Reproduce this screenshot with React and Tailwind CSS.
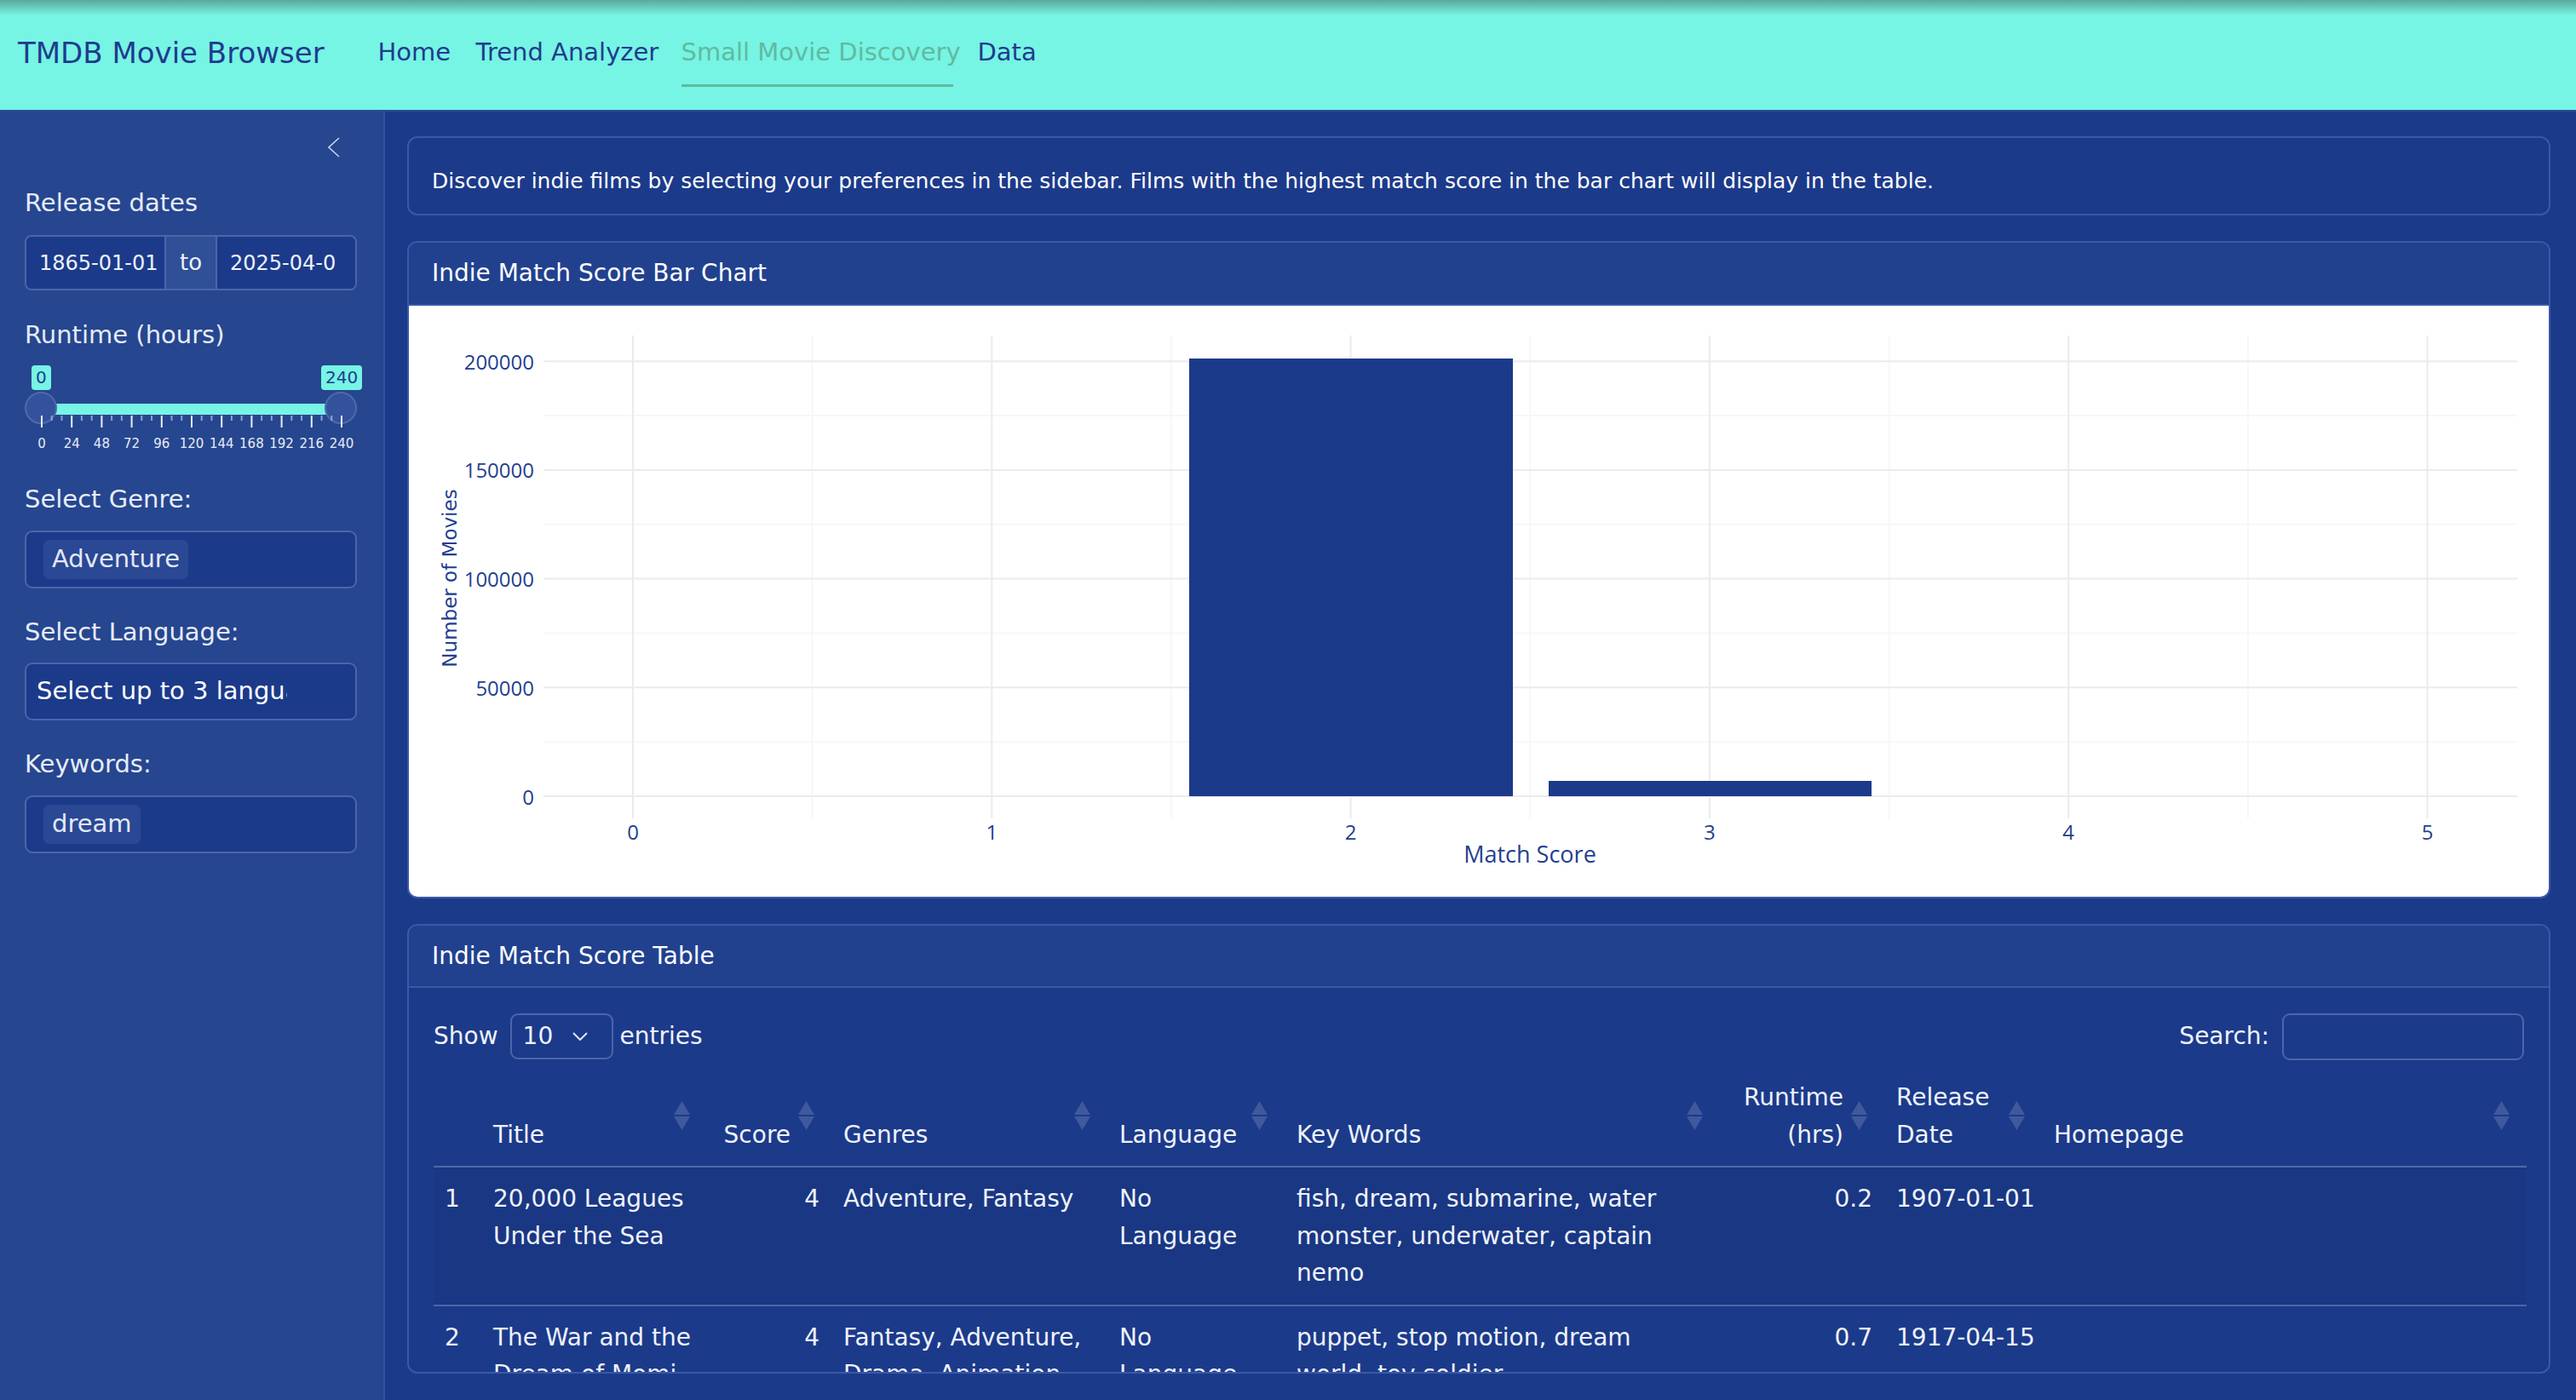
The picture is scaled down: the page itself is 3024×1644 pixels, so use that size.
import React from 'react';

const navLinks = [
    { label: 'Home', w: 'w-[115px]' },
    { label: 'Trend Analyzer', w: 'w-[241px]' },
    { label: 'Small Movie Discovery', w: 'w-[348px]', active: true },
    { label: 'Data', w: 'w-[100px]' },
];

const rows = [
    {
        n: 1,
        title: '20,000 Leagues Under the Sea',
        score: 4,
        genres: 'Adventure, Fantasy',
        lang: 'No Language',
        words: 'fish, dream, submarine, water monster, underwater, captain nemo',
        runtime: '0.2',
        date: '1907-01-01',
    },
    {
        n: 2,
        title: 'The War and the Dream of Momi',
        score: 4,
        genres: 'Fantasy, Adventure, Drama, Animation',
        lang: 'No Language',
        words: 'puppet, stop motion, dream world, toy soldier',
        runtime: '0.7',
        date: '1917-04-15',
    },
];

const columns = [
    { label: '', w: 'w-[56px]' },
    { label: 'Title', w: 'w-[265px]', sort: true },
    { label: 'Score', w: 'w-[146px]', sort: true, right: true },
    { label: 'Genres', w: 'w-[324px]', sort: true },
    { label: 'Language', w: 'w-[208px]', sort: true },
    { label: 'Key Words', w: 'w-[511px]', sort: true },
    { label: 'Runtime (hrs)', w: 'w-[193px]', sort: true, right: true },
    { label: 'Release Date', w: 'w-[185px]', sort: true },
    { label: 'Homepage', w: 'w-[569px]', sort: true },
];

function SortIcon() {
    return (
        <svg width="19" height="34" viewBox="0 0 19 34" className="absolute right-[20px] top-1/2 -translate-y-1/2">
            <polygon points="9.5,0 19,16 0,16" fill="#ffffff" fillOpacity="0.16" />
            <polygon points="0,18 19,18 9.5,34" fill="#ffffff" fillOpacity="0.16" />
        </svg>
    );
}

function Chip({ children }) {
    return (
        <span className="h-[46px] px-[10px] flex items-center rounded-[7px] bg-[#2a4894] text-[29px] text-[#e3e9f5]">
            {children}
        </span>
    );
}

function RangeSlider() {
    const majors = [0, 24, 48, 72, 96, 120, 144, 168, 192, 216, 240];
    const step = 35.2;
    const minors = [];
    for (let i = 0; i < 30; i++) {
        if (i % 3 !== 0) minors.push(20 + (i * step) / 3);
    }
    return (
        <div className="relative h-[119px]">
            {/* value bubbles */}
            <span className="absolute left-[8px] top-[14px] h-[29px] px-[5px] rounded-[4px] bg-[#76f4e4] text-[20px] leading-[29px] text-[#1f3b8d]">0</span>
            <span className="absolute left-[348px] top-[14px] h-[29px] px-[5px] rounded-[4px] bg-[#76f4e4] text-[20px] leading-[29px] text-[#1f3b8d]">240</span>
            {/* track */}
            <div className="absolute left-[19px] right-[19px] top-[59px] h-[13px] bg-[#76f4e4]" />
            {/* handles */}
            <div className="absolute left-0 top-[45px] w-[38px] h-[38px] rounded-full bg-[#34529b] border-2 border-[#4f6aab]" />
            <div className="absolute right-0 top-[45px] w-[38px] h-[38px] rounded-full bg-[#34529b] border-2 border-[#4f6aab]" />
            {/* ticks + labels */}
            <svg width="392" height="44" viewBox="0 0 392 44" className="absolute left-0 top-[73px]">
                {minors.map((x) => (
                    <rect key={x} x={x - 1} y="0" width="2" height="6" fill="#8fa2cf" />
                ))}
                {majors.map((m, i) => (
                    <g key={m}>
                        <rect x={20 + i * step - 1} y="0" width="2" height="14" fill="#e6ecf7" />
                        <text x={20 + i * step} y="38" textAnchor="middle" fontSize="15" fontFamily="DejaVu Sans, sans-serif" fill="#e6ecf7">
                            {m}
                        </text>
                    </g>
                ))}
            </svg>
        </div>
    );
}

function BarChart() {
    const X0 = 263;
    const DX = 421.3;
    const Y0 = 576;
    const PER = 127.7 / 50000;
    const left = 158;
    const right = 2475;
    const top = 35;
    const bottom = 602;
    const yTicks = [0, 50000, 100000, 150000, 200000];
    const yMinor = [25000, 75000, 125000, 175000];
    const xTicks = [0, 1, 2, 3, 4, 5];
    const xMinor = [0.5, 1.5, 2.5, 3.5, 4.5];
    const yPos = (v) => Y0 - v * PER;
    const xPos = (u) => X0 + u * DX;
    return (
        <svg width="2512" height="696" viewBox="0 0 2512 696" className="block">
            {/* minor grid */}
            {yMinor.map((v) => (
                <line key={v} x1={left} x2={right} y1={yPos(v)} y2={yPos(v)} stroke="#f7f7f7" strokeWidth="2" />
            ))}
            {xMinor.map((u) => (
                <line key={u} x1={xPos(u)} x2={xPos(u)} y1={top} y2={bottom} stroke="#f7f7f7" strokeWidth="2" />
            ))}
            {/* major grid */}
            {yTicks.map((v) => (
                <line key={v} x1={left} x2={right} y1={yPos(v)} y2={yPos(v)} stroke="#ebebeb" strokeWidth="2" />
            ))}
            {xTicks.map((u) => (
                <line key={u} x1={xPos(u)} x2={xPos(u)} y1={top} y2={bottom} stroke="#ebebeb" strokeWidth="2" />
            ))}
            {/* bars */}
            <rect x="916" y="62" width="380" height={Y0 - 62} fill="#1c3a8a" />
            <rect x="1338" y="558" width="379" height={Y0 - 558} fill="#1c3a8a" />
            {/* tick labels */}
            {yTicks.map((v) => (
                <text key={v} x="147" y={yPos(v)} textAnchor="end" dominantBaseline="central" fontSize="24" fontFamily="Open Sans, sans-serif" fill="#243f8f">
                    {v}
                </text>
            ))}
            {xTicks.map((u) => (
                <text key={u} x={xPos(u)} y="617" textAnchor="middle" dominantBaseline="central" fontSize="24" fontFamily="Open Sans, sans-serif" fill="#243f8f">
                    {u}
                </text>
            ))}
            <text x="1316" y="643" textAnchor="middle" dominantBaseline="central" fontSize="27" fontFamily="Open Sans, sans-serif" fill="#243f8f">
                Match Score
            </text>
            <text x="48" y="320" textAnchor="middle" dominantBaseline="central" fontSize="23" fontFamily="DejaVu Sans, sans-serif" fill="#243f8f" transform="rotate(-90 48 320)">
                Number of Movies
            </text>
        </svg>
    );
}

export default function App() {
    return (
        <div className="w-[3024px] h-[1644px] overflow-hidden flex flex-col bg-[#1c3a8a] font-[family-name:'DejaVu_Sans',sans-serif] text-[#eef2fa]">

            {/* ── Navbar ───────────────────────────────────────── */}
            <header className="h-[131px] shrink-0 flex items-center pb-[5px] pl-[21px] bg-[linear-gradient(to_bottom,#5aa99c_0px,#76f4e4_18px)] border-b-2 border-[#2b4b95]">
                <span className="w-[408px] text-[34px] text-[#1f3b8d] whitespace-nowrap">TMDB Movie Browser</span>
                <nav className="flex items-center">
                    {navLinks.map((l) => (
                        <a
                            key={l.label}
                            className={`relative ${l.w} h-[44px] flex items-center px-[14.5px] text-[29px] whitespace-nowrap ${l.active ? 'text-[#61ba9f]' : 'text-[#1f3b8d]'}`}
                        >
                            {l.label}
                            {l.active && <span className="absolute left-[14.5px] right-[14.5px] top-[59px] h-[3px] bg-[#5bbb9d]" />}
                        </a>
                    ))}
                </nav>
            </header>

            <div className="flex flex-1 min-h-0">

                {/* ── Sidebar ──────────────────────────────────── */}
                <aside className="w-[452px] shrink-0 bg-[#26468f] border-r-2 border-[#34529c] pl-[29px] pr-[31px] pt-[30px]">
                    <div className="flex justify-end pr-[20px]">
                        <svg width="14" height="24" viewBox="0 0 14 24">
                            <polyline points="13,1 1,12 13,23" fill="none" stroke="#c9d3ea" strokeWidth="1.6" />
                        </svg>
                    </div>

                    <p className="mt-[31px] text-[29px] leading-[44px] text-[#e6ecf7]">Release dates</p>
                    <div className="mt-[16px] flex h-[65px] border-2 border-[#4a66aa] rounded-[8px] overflow-hidden text-[24px] text-[#eef2fa]">
                        <div className="w-[162px] flex items-center pl-[15px] bg-[#1c3a8a] whitespace-nowrap overflow-hidden">1865-01-01</div>
                        <div className="w-[62px] flex items-center justify-center bg-[#2f4f96] border-x-2 border-[#4a66aa] text-[26px]">to</div>
                        <div className="flex-1 flex items-center pl-[15px] bg-[#1c3a8a]">
                            <span className="w-[125px] whitespace-nowrap overflow-hidden">2025-04-01</span>
                        </div>
                    </div>

                    <p className="mt-[30px] text-[29px] leading-[44px] text-[#e6ecf7]">Runtime (hours)</p>
                    <RangeSlider />

                    <p className="mt-[30px] text-[29px] leading-[44px] text-[#e6ecf7]">Select Genre:</p>
                    <div className="mt-[15px] h-[68px] border-2 border-[#4a66aa] rounded-[9px] bg-[#1c3a8a] flex items-center pl-[20px]">
                        <Chip>Adventure</Chip>
                    </div>

                    <p className="mt-[29px] text-[29px] leading-[44px] text-[#e6ecf7]">Select Language:</p>
                    <div className="mt-[14px] h-[68px] border-2 border-[#4a66aa] rounded-[9px] bg-[#1c3a8a] flex items-center pl-[12px]">
                        <span className="w-[294px] overflow-hidden whitespace-nowrap text-[29px] text-white">Select up to 3 languages</span>
                    </div>

                    <p className="mt-[29px] text-[29px] leading-[44px] text-[#e6ecf7]">Keywords:</p>
                    <div className="mt-[15px] h-[68px] border-2 border-[#4a66aa] rounded-[9px] bg-[#1c3a8a] flex items-center pl-[20px]">
                        <Chip>dream</Chip>
                    </div>
                </aside>

                {/* ── Main ─────────────────────────────────────── */}
                <main className="flex-1 min-w-0 pl-[26px] pr-[30px] pt-[29px] flex flex-col gap-[30px]">

                    {/* Intro */}
                    <div className="h-[93px] shrink-0 border-2 border-[#3a59a5] rounded-[12px] px-[27px] pt-[12px] flex items-center text-[25px] text-white whitespace-nowrap">
                        Discover indie films by selecting your preferences in the sidebar. Films with the highest match score in the bar chart will display in the table.
                    </div>

                    {/* Bar chart card */}
                    <section className="h-[772px] shrink-0 border-2 border-[#3a59a5] rounded-[12px] overflow-hidden flex flex-col">
                        <div className="h-[74px] shrink-0 bg-[#21418f] border-b-2 border-[#3a59a5] px-[27px] flex items-center text-[28px] text-white">
                            Indie Match Score Bar Chart
                        </div>
                        <div className="flex-1 bg-white">
                            <BarChart />
                        </div>
                    </section>

                    {/* Table card */}
                    <section className="h-[528px] shrink-0 border-2 border-[#3a59a5] rounded-[12px] overflow-hidden flex flex-col">
                        <div className="h-[73px] shrink-0 bg-[#21418f] border-b-2 border-[#3a59a5] px-[27px] flex items-center text-[28px] text-white">
                            Indie Match Score Table
                        </div>
                        <div className="px-[29px] pt-[30px]">
                            <div className="h-[54px] flex items-center justify-between text-[28px]">
                                <div className="flex items-center">
                                    <span>Show</span>
                                    <div className="ml-[14px] w-[121px] h-[54px] border-2 border-[#4a66aa] rounded-[9px] flex items-center justify-between pl-[13px] pr-[28px]">
                                        <span>10</span>
                                        <svg width="18" height="10" viewBox="0 0 18 10">
                                            <polyline points="1,1 9,9 17,1" fill="none" stroke="#dfe6f5" strokeWidth="2" />
                                        </svg>
                                    </div>
                                    <span className="ml-[8px]">entries</span>
                                </div>
                                <div className="flex items-center">
                                    <span>Search:</span>
                                    <div className="ml-[15px] w-[284px] h-[55px] border-2 border-[#4a66aa] rounded-[9px]" />
                                </div>
                            </div>

                            <table className="mt-[7px] table-fixed w-[2457px] border-collapse text-[28px] leading-[43.5px]">
                                <colgroup>
                                    {columns.map((c, i) => (
                                        <col key={i} className={c.w} />
                                    ))}
                                </colgroup>
                                <thead>
                                    <tr className="border-b-2 border-[#4d69ac]">
                                        {columns.map((c, i) => (
                                            <th
                                                key={i}
                                                className={`relative align-bottom font-normal pt-[16px] pb-[15px] pl-[14px] pr-[48px] ${c.right ? 'text-right' : 'text-left'}`}
                                            >
                                                {c.label}
                                                {c.sort && <SortIcon />}
                                            </th>
                                        ))}
                                    </tr>
                                </thead>
                                <tbody>
                                    {rows.map((r, i) => (
                                        <tr key={r.n} className={`border-b-2 border-[#4a66aa] ${i === 0 ? 'bg-[#1a3783]' : ''}`}>
                                            <td className="align-top py-[15px] pl-[13px]">{r.n}</td>
                                            <td className="align-top py-[15px] px-[14px]">{r.title}</td>
                                            <td className="align-top py-[15px] px-[14px] text-right">{r.score}</td>
                                            <td className="align-top py-[15px] px-[14px]">{r.genres}</td>
                                            <td className="align-top py-[15px] px-[14px]">{r.lang}</td>
                                            <td className="align-top py-[15px] px-[14px]">{r.words}</td>
                                            <td className="align-top py-[15px] px-[14px] text-right">{r.runtime}</td>
                                            <td className="align-top py-[15px] px-[14px] whitespace-nowrap">{r.date}</td>
                                            <td className="align-top py-[15px] px-[14px]"></td>
                                        </tr>
                                    ))}
                                </tbody>
                            </table>
                        </div>
                    </section>
                </main>
            </div>
        </div>
    );
}
